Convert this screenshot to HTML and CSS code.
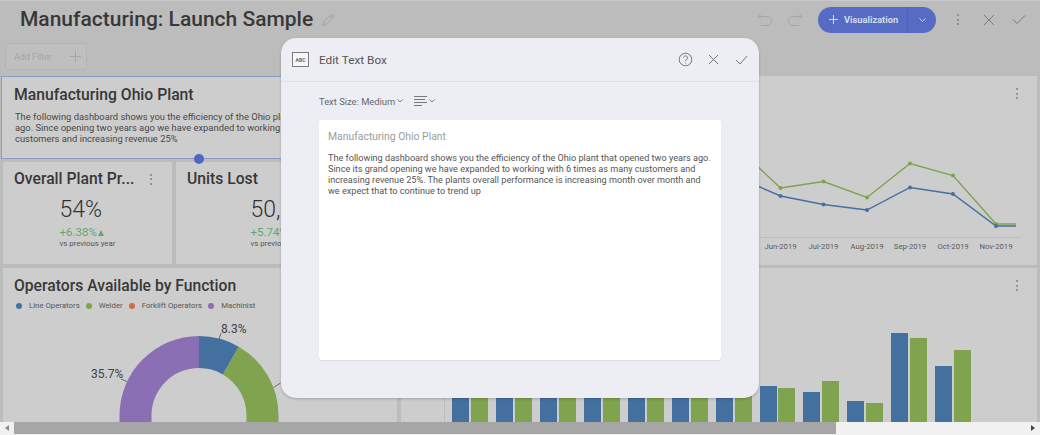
FILE: index.html
```html
<!DOCTYPE html>
<html lang="en">
<head>
<meta charset="utf-8">
<title>Manufacturing: Launch Sample</title>
<link rel="stylesheet" href="styles.css">
</head>
<body>
<div class="app">
  <header class="topbar">
    <h1 class="page-title">Manufacturing: Launch Sample</h1>
    <svg class="pencil" width="14" height="14" viewBox="0 0 14 14"><path d="M1.5 12.5l.8-3.2L10 1.6a1 1 0 0 1 1.4 0l1 1a1 1 0 0 1 0 1.4L4.7 11.7zM2.3 9.3l2.4 2.4M8.9 2.7l2.4 2.4"/></svg>
    <div class="top-actions">
      <svg class="ico faint" width="16" height="16" viewBox="0 0 16 16"><path d="M4 1.5L1 4.5l3 3M1 4.5h9a4.5 4.5 0 0 1 0 9H4"/></svg>
      <svg class="ico faint redo" width="16" height="16" viewBox="0 0 16 16"><path d="M12 1.5l3 3-3 3M15 4.5H6a4.5 4.5 0 0 0 0 9h6"/></svg>
      <div class="viz-btn">
        <span class="viz-main"><svg class="ico-light" width="11" height="11" viewBox="0 0 11 11"><path d="M5.5 1v9M1 5.5h9"/></svg>Visualization</span>
        <span class="viz-drop"><svg class="ico-light" width="9" height="6" viewBox="0 0 9 6"><path d="M1.5 1.5L4.5 4.5l3-3"/></svg></span>
      </div>
      <span class="kebab top-kebab"><i></i><i></i><i></i></span>
      <svg class="ico dark close" width="12" height="12" viewBox="0 0 12 12"><path d="M1 1l10 10M11 1L1 11"/></svg>
      <svg class="ico dark confirm" width="14" height="11" viewBox="0 0 14 11"><path d="M1 5.5l4 4 8-8"/></svg>
    </div>
  </header>

  <div class="filter-row">
    <div class="filter-box">
      <span>Add Filter</span>
      <svg class="ico faint" width="13" height="13" viewBox="0 0 13 13"><path d="M6.5 1v11M1 6.5h11"/></svg>
    </div>
  </div>

  <main class="dash">
    <section class="row-top">
      <div class="col-left">
        <article class="text-card">
          <h2 class="card-title">Manufacturing Ohio Plant</h2>
          <p>The following dashboard shows you the efficiency of the Ohio plant that opened two years<br>ago. Since opening two years ago we have expanded to working with 6 times as many<br>customers and increasing revenue 25%</p>
          <span class="handle"></span>
        </article>
        <div class="kpi-row">
          <article class="kpi kpi-first">
            <div class="kpi-head"><h2 class="card-title">Overall Plant Pr...</h2><span class="kebab"><i></i><i></i><i></i></span></div>
            <div class="kpi-body">
              <div class="kpi-value">54%</div>
              <div class="kpi-delta">+6.38%<span class="tri"></span></div>
              <div class="kpi-note">vs previous year</div>
            </div>
          </article>
          <article class="kpi kpi-second">
            <div class="kpi-head"><h2 class="card-title">Units Lost</h2></div>
            <div class="kpi-body">
              <div class="kpi-value">50,210</div>
              <div class="kpi-delta">+5.74%<span class="tri"></span></div>
              <div class="kpi-note">vs previous year</div>
            </div>
          </article>
        </div>
      </div>
      <article class="line-card">
        <span class="kebab card-kebab"><i></i><i></i><i></i></span>
        <svg class="chart" width="652" height="188" viewBox="385 77 652 188">
          <line class="axis" x1="740" y1="238.5" x2="1022" y2="238.5"/>
          <polyline class="ln green" points="740,150 781.5,189 824.5,182.5 868,198.5 911,164.5 954,176.5 997,225 1017,225"/>
          <polyline class="ln blue" points="740,179 781.5,197 824.5,205.5 868,211 911,188.5 954,195 997,227 1017,227"/>
          <g class="pt-green"><circle cx="781.5" cy="189" r="2"/><circle cx="824.5" cy="182.5" r="2"/><circle cx="868" cy="198.5" r="2"/><circle cx="911" cy="164.5" r="2"/><circle cx="954" cy="176.5" r="2"/><circle cx="997" cy="225" r="2"/></g>
          <g class="pt-blue"><circle cx="781.5" cy="197" r="2"/><circle cx="824.5" cy="205.5" r="2"/><circle cx="868" cy="211" r="2"/><circle cx="911" cy="188.5" r="2"/><circle cx="954" cy="195" r="2"/><circle cx="997" cy="227" r="2"/></g>
          <g class="tick"><text x="781.5" y="250">Jun-2019</text><text x="824.5" y="250">Jul-2019</text><text x="868" y="250">Aug-2019</text><text x="911" y="250">Sep-2019</text><text x="954" y="250">Oct-2019</text><text x="997" y="250">Nov-2019</text></g>
        </svg>
      </article>
    </section>
    <section class="row-bottom">
      <article class="donut-card">
        <h2 class="card-title">Operators Available by Function</h2>
        <ul class="legend">
          <li><i class="dot d-blue"></i>Line Operators</li>
          <li><i class="dot d-green"></i>Welder</li>
          <li><i class="dot d-orange"></i>Forklift Operators</li>
          <li><i class="dot d-purple"></i>Machinist</li>
        </ul>
        <svg class="chart donut" width="394" height="154" viewBox="3 268 394 154">
          <path class="s-blue" d="M199 336A79.5 79.5 0 0 1 238.8 346.7L222.8 374.4A47.5 47.5 0 0 0 199 368Z"/>
          <path class="s-green" d="M238.8 346.7A79.5 79.5 0 0 1 278.5 415.5V435H246.5V415.5A47.5 47.5 0 0 0 222.8 374.4Z"/>
          <path class="s-purple" d="M119.5 435V415.5A79.5 79.5 0 0 1 199 336V368A47.5 47.5 0 0 0 151.5 415.5V435Z"/>
          <path class="leader" d="M219 339l2-6M121 379l6 2.5M273.5 387.5l7-4.5"/>
          <text class="pct" x="221" y="333">8.3%</text>
          <text class="pct" x="91" y="378">35.7%</text>
        </svg>
      </article>
      <article class="bar-card">
        <span class="kebab card-kebab"><i></i><i></i><i></i></span>
        <svg class="chart" width="636" height="154" viewBox="401 268 636 154">
          <line class="axis" x1="444.5" y1="360" x2="444.5" y2="422"/>
          <g class="b-blue">
            <rect x="452" y="380" width="17" height="42"/><rect x="496" y="380" width="17" height="42"/><rect x="540" y="380" width="17" height="42"/><rect x="584" y="380" width="17" height="42"/><rect x="628" y="380" width="17" height="42"/><rect x="672" y="380" width="17" height="42"/><rect x="716" y="380" width="17" height="42"/>
            <rect x="760" y="386" width="17" height="36"/><rect x="803" y="392" width="17" height="30"/><rect x="847" y="401" width="17" height="21"/><rect x="891" y="333" width="17" height="89"/><rect x="935" y="366" width="17" height="56"/>
          </g>
          <g class="b-green">
            <rect x="471" y="380" width="17" height="42"/><rect x="515" y="380" width="17" height="42"/><rect x="559" y="380" width="17" height="42"/><rect x="603" y="380" width="17" height="42"/><rect x="647" y="380" width="17" height="42"/><rect x="691" y="380" width="17" height="42"/><rect x="735" y="380" width="17" height="42"/>
            <rect x="778" y="388" width="17" height="34"/><rect x="822" y="381" width="17" height="41"/><rect x="866" y="403" width="17" height="19"/><rect x="910" y="338" width="17" height="84"/><rect x="954" y="350" width="17" height="72"/>
          </g>
        </svg>
      </article>
    </section>
  </main>

  <div class="scrollbar">
    <span class="arrow arrow-left"></span>
    <span class="thumb"></span>
    <span class="arrow arrow-right"></span>
  </div>

  <div class="modal">
    <div class="modal-head">
      <span class="abc">ABC</span>
      <h3 class="modal-title">Edit Text Box</h3>
      <svg class="ico modal-help" width="15" height="15" viewBox="0 0 15 15"><circle cx="7.5" cy="7.5" r="6.3"/><path d="M5.5 5.8a2 2 0 1 1 3 1.8c-.7.4-1 .8-1 1.5"/><circle class="fill" cx="7.5" cy="11" r=".6"/></svg>
      <svg class="ico modal-x" width="11" height="11" viewBox="0 0 11 11"><path d="M1 1l9 9M10 1l-9 9"/></svg>
      <svg class="ico modal-ok" width="13" height="10" viewBox="0 0 13 10"><path d="M1 5l4 4 7-8"/></svg>
    </div>
    <div class="modal-tools">
      <span class="tool-label">Text Size: Medium</span>
      <svg class="ico tool-chev" width="6" height="4" viewBox="0 0 6 4"><path d="M.5.5L3 3 5.5.5"/></svg>
      <svg class="ico align" width="13" height="11" viewBox="0 0 13 11"><path d="M0 .5h13M0 3.5h11M0 6.5h13M0 9.5h8"/></svg>
      <svg class="ico tool-chev" width="6" height="4" viewBox="0 0 6 4"><path d="M.5.5L3 3 5.5.5"/></svg>
    </div>
    <div class="editor">
      <div class="editor-title">Manufacturing Ohio Plant</div>
      <p>The following dashboard shows you the efficiency of the Ohio plant that opened two years ago.<br>Since its grand opening we have expanded to working with 6 times as many customers and<br>increasing revenue 25%. The plants overall performance is increasing month over month and<br>we expect that to continue to trend up</p>
    </div>
  </div>
</div>
</body>
</html>
```
FILE: styles.css
```css
* { box-sizing: border-box; }
html, body { margin: 0; padding: 0; }
body { font-family: Roboto, "Liberation Sans", sans-serif; color: #333; }
h1, h2, h3, p, ul { margin: 0; padding: 0; }

.app { position: relative; width: 1040px; height: 435px; overflow: hidden; display: flex; flex-direction: column; background: #bcbcbc; }

.topbar { height: 38px; flex: none; display: flex; align-items: center; padding: 0 0 0 20px; border-top: 1px solid #c9c9c9; }
.page-title { font-size: 21px; font-weight: 500; color: #383838; line-height: 36px; margin-top: -1px; }
.pencil { margin-left: 8px; fill: none; stroke: #a2a2a2; stroke-width: 1; }
.top-actions { margin-left: auto; display: flex; align-items: center; }
.ico { fill: none; stroke: #777; stroke-width: 1; display: block; flex: none; }
.ico .fill { fill: #777; stroke: none; }
.ico.faint { stroke: #a6a6a6; }
.ico.dark { stroke: #7a7a7a; }
.redo { margin-left: 14px; }
.viz-btn { display: flex; margin-left: 15px; height: 26px; width: 118px; border-radius: 13px; background: #566cc4; overflow: hidden; color: #d5daee; font-size: 9.3px; font-weight: 700; }
.viz-main { flex: 1; display: flex; align-items: center; gap: 5px; padding-left: 10px; }
.viz-drop { width: 29px; display: flex; align-items: center; justify-content: center; border-left: 1px solid #4d62b4; }
.ico-light { fill: none; stroke: #d5daee; stroke-width: 1; display: block; }
.kebab { display: flex; flex-direction: column; gap: 2.5px; width: 2px; }
.kebab i { display: block; width: 2px; height: 2px; border-radius: 50%; background: #808080; }
.top-kebab { margin-left: 21px; }
.close { margin-left: 24px; }
.confirm { margin-left: 17px; margin-right: 14px; }

.filter-row { height: 38px; flex: none; padding: 5px 0 0 5px; }
.filter-box { width: 82px; height: 27px; border: 1px solid #b4b4b4; background: #bfbfbf; border-radius: 3px; display: flex; align-items: center; justify-content: space-between; padding: 0 4px 0 8px; font-size: 8.9px; color: #a4a4a4; }

.dash { flex: 1; min-height: 0; display: flex; flex-direction: column; gap: 3px; padding: 0 3px 0 1px; }
.row-top { height: 189px; flex: none; display: flex; gap: 3px; }
.col-left { width: 380px; flex: none; display: flex; flex-direction: column; gap: 3px; }
.card-title { font-size: 15.7px; font-weight: 500; color: #383838; line-height: 20px; white-space: nowrap; }

.text-card { position: relative; height: 83px; background: #cdcdcd; border: 1px solid #8c99c6; border-right: 0; padding: 8px 0 0 12px; }
.text-card p { font-size: 9.4px; line-height: 11px; color: #484848; margin: 6px 0 0 1px; white-space: nowrap; }
.handle { position: absolute; left: 192px; bottom: -6px; width: 10px; height: 10px; border-radius: 50%; background: #4f66c4; }

.kpi-row { flex: 1; display: flex; gap: 4px; margin-left: 2px; }
.kpi { background: #cdcdcd; text-align: center; padding: 7px 11px 0; height: 102px; }
.kpi-first { width: 169px; }
.kpi-second { flex: 1; }
.kpi-head { display: flex; align-items: center; justify-content: space-between; text-align: left; height: 20px; padding-right: 9px; }
.kpi-body { display: inline-flex; flex-direction: column; align-items: flex-start; text-align: left; width: 56px; white-space: nowrap; }
.kpi-value { font-size: 23px; font-weight: 300; color: #333; line-height: 28px; margin-top: 7px; }
.kpi-delta { font-size: 11.5px; color: #63a66d; line-height: 14px; margin-top: 1px; }
.tri { display: inline-block; width: 0; height: 0; margin-left: 1px; border-left: 3.5px solid transparent; border-right: 3.5px solid transparent; border-bottom: 6px solid #63a66d; }
.kpi-note { font-size: 7.8px; color: #555; line-height: 10px; }

.line-card, .bar-card { position: relative; flex: 1; background: #cdcdcd; overflow: hidden; }
.card-kebab { position: absolute; right: 19px; top: 12px; z-index: 1; }
.chart { display: block; }
.axis { stroke: #bdbdbd; stroke-width: 1; }
.ln { fill: none; stroke-width: 1.4; }
.ln.green { stroke: #7fa34f; }
.ln.blue { stroke: #44709f; }
.pt-green { fill: #7fa34f; }
.pt-blue { fill: #44709f; }
.tick text { font-size: 7.7px; fill: #5a5a5a; text-anchor: middle; }

.row-bottom { flex: 1; min-height: 0; display: flex; gap: 4px; margin-left: 2px; }
.donut-card { position: relative; width: 394px; flex: none; background: #cdcdcd; padding: 8px 0 0 11px; overflow: hidden; }
.legend { list-style: none; display: flex; margin: 4px 0 0 2px; font-size: 7.8px; line-height: 11px; color: #565656; }
.legend li { display: flex; align-items: center; margin-right: 6px; }
.dot { width: 6px; height: 6px; border-radius: 50%; margin-right: 7px; }
.d-blue { background: #44709f; }
.d-green { background: #7fa34f; }
.d-orange { background: #d0694e; }
.d-purple { background: #8b6fb5; }
.donut { position: absolute; left: 0; top: 0; }
.s-blue { fill: #44709f; }
.s-green { fill: #7fa34f; }
.s-purple { fill: #8b6fb5; }
.leader { fill: none; stroke: #555; stroke-width: .8; }
.pct { font-size: 12px; fill: #444; }
.b-blue { fill: #44709f; }
.b-green { fill: #7fa34f; }

.scrollbar { height: 13px; flex: none; display: flex; align-items: stretch; background: #f1f1f1; }
.arrow { width: 14px; flex: none; position: relative; }
.arrow::after { content: ""; position: absolute; top: 3px; width: 0; height: 0; border-top: 3.5px solid transparent; border-bottom: 3.5px solid transparent; }
.arrow-left::after { left: 5px; border-right: 4px solid #8a8a8a; }
.arrow-right { margin-left: auto; }
.arrow-right::after { left: 5px; border-left: 4px solid #444; }
.thumb { width: 822px; height: 12px; background: #a6a6a6; }

.modal { position: absolute; left: 281px; top: 38px; width: 478px; height: 360px; background: #edeef3; border-radius: 15px; box-shadow: 0 1px 3px rgba(0,0,0,.2); display: flex; flex-direction: column; }
.modal-head { height: 44px; flex: none; display: flex; align-items: center; padding: 0 11px; border-bottom: 1px solid #dfe0e5; }
.abc { width: 17px; height: 15px; border: 1px solid #7b7b7b; background: #f6f6f8; font-size: 5px; font-weight: 700; color: #666; display: flex; align-items: center; justify-content: center; flex: none; }
.modal-title { font-size: 11.8px; font-weight: 400; color: #555; margin-left: 10px; }
.modal-help { margin-left: auto; }
.modal-x { margin-left: 15px; }
.modal-ok { margin-left: 16px; }
.modal-tools { height: 38px; flex: none; display: flex; align-items: center; padding-left: 38px; }
.tool-label { font-size: 9.4px; color: #666; }
.tool-chev { margin-left: 2px; }
.align { margin-left: 11px; }
.editor { margin-left: 38px; width: 402px; height: 240px; background: #fff; border-radius: 3px; box-shadow: 0 1px 1px rgba(0,0,0,.08); padding: 10px 9px; }
.editor-title { font-size: 10.4px; line-height: 13px; color: #9c9c9c; }
.editor p { font-size: 9.12px; line-height: 11px; color: #555; margin-top: 10px; white-space: nowrap; }
```
